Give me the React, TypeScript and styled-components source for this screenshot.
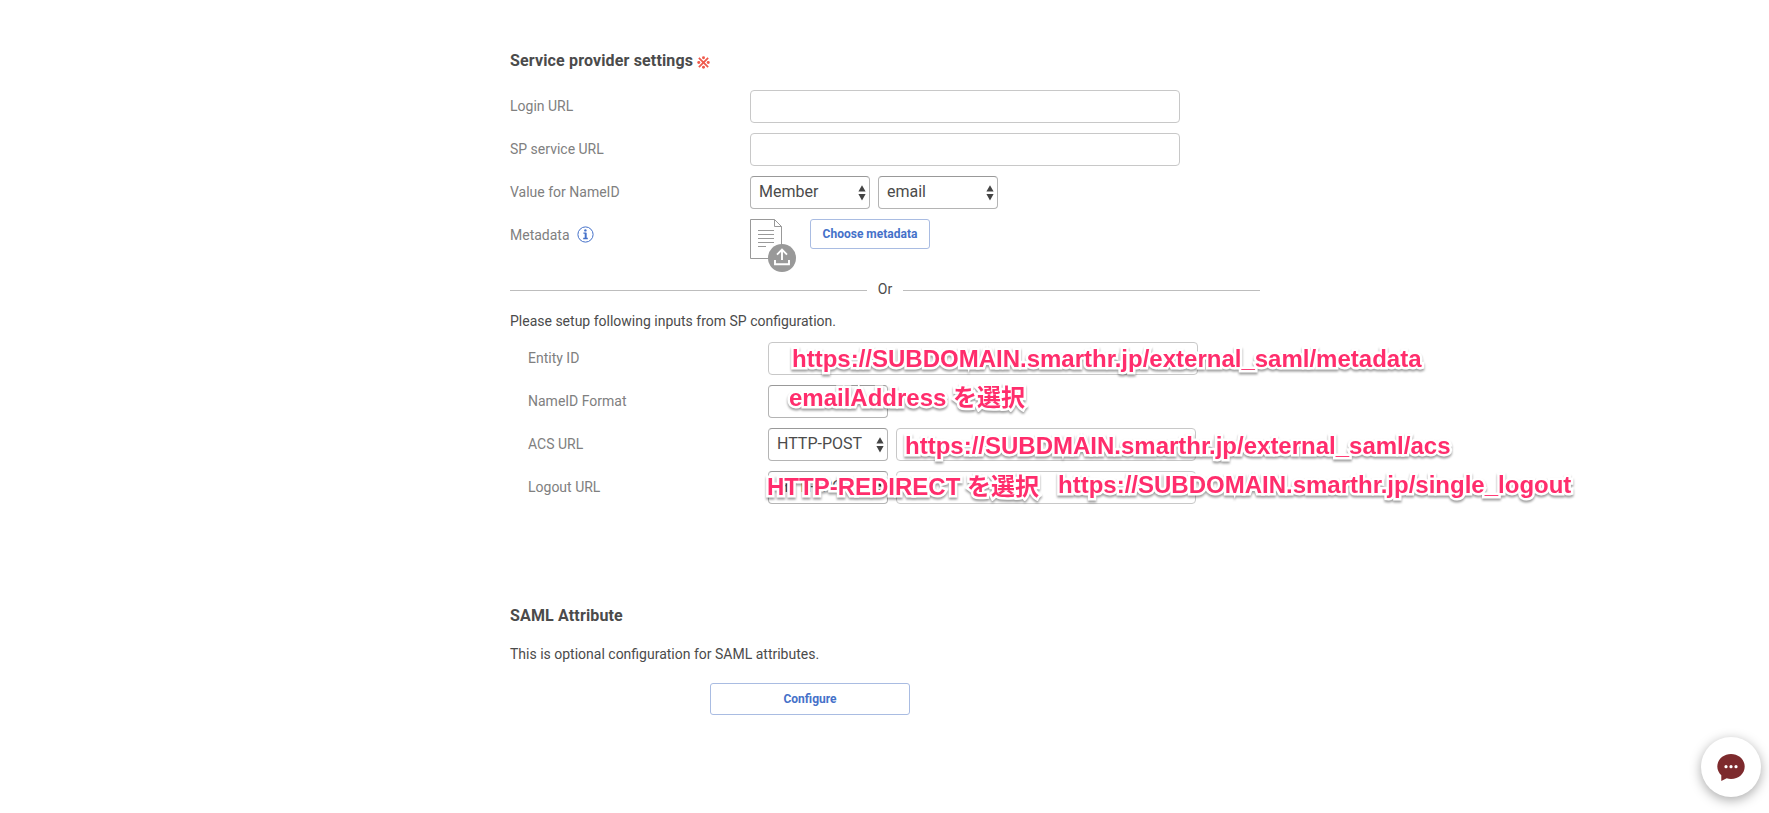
import React from "react";
import styled, { createGlobalStyle } from "styled-components";

const GlobalStyle = createGlobalStyle`
  *, *::before, *::after { box-sizing: border-box; }
  body {
    margin: 0;
    background: #fff;
    color: #4b4b4b;
    font-family: Roboto, "Noto Sans CJK JP", sans-serif;
    font-size: 14px;
    overflow: hidden;
  }
`;

const Page = styled.main`
  position: relative;
  display: flex;
  flex-direction: column;
  width: 1769px;
  height: 813px;
  padding: 50px 509px 0 510px;
`;

const Heading = styled.h2`
  display: flex;
  align-items: center;
  gap: 4px;
  margin: 0;
  height: 22px;
  font-size: 16px;
  font-weight: 700;
  line-height: 22px;
  letter-spacing: 0.15px;
  color: #4b4b4b;
`;

const Fields = styled.div<{ $nested?: boolean }>`
  display: flex;
  flex-direction: column;
  gap: 10px;
  margin-top: ${(p) => (p.$nested ? 11 : 18)}px;
  padding-left: ${(p) => (p.$nested ? 18 : 0)}px;
`;

const Row = styled.div`
  display: grid;
  grid-template-columns: 240px 1fr;
  height: 33px;
`;

const Label = styled.span`
  display: flex;
  align-items: center;
  gap: 7px;
  height: 32px;
  color: #808080;
`;

const Controls = styled.div`
  display: flex;
  align-items: flex-start;
  gap: 8px;
`;

const TextInput = styled.input<{ $width: number }>`
  width: ${(p) => p.$width}px;
  height: 33px;
  padding: 0 8px;
  border: 1px solid #c8c8c8;
  border-radius: 4px;
  background: #fff;
`;

const SelectBox = styled.div`
  display: flex;
  align-items: center;
  justify-content: space-between;
  width: 120px;
  height: 33px;
  padding: 0 3px 0 8px;
  border: 1px solid #b4b4b4;
  border-top-color: #999;
  border-radius: 4px;
  font-size: 16px;
  line-height: 30px;
  color: #4b4b4b;
`;

const SelectText = styled.span`
  padding-bottom: 1px;
`;

const OutlineButton = styled.button<{ $width: number; $height: number }>`
  width: ${(p) => p.$width}px;
  height: ${(p) => p.$height}px;
  padding: 0;
  border: 1px solid #a9bce2;
  border-radius: 3px;
  background: #fff;
  color: #4571c9;
  font: 700 12px Roboto, sans-serif;
`;

const MetadataControls = styled.div`
  display: flex;
  align-items: flex-start;
  gap: 12px;
`;

const Divider = styled.div`
  display: flex;
  align-items: center;
  gap: 11px;
  height: 20px;
  margin-top: 27px;
  &::before, &::after {
    content: "";
    flex: 1;
    height: 1px;
    margin-top: 2px;
    background: #bdbdbd;
  }
`;

const Paragraph = styled.p<{ $top: number }>`
  margin: ${(p) => p.$top}px 0 0;
  height: 20px;
  line-height: 20px;
`;

const Attribute = styled.section`
  display: flex;
  flex-direction: column;
  margin-top: 101px;
`;

const ButtonRow = styled.div`
  display: flex;
  padding-left: 200px;
  margin-top: 19px;
`;

const Note = styled.span<{ $x: number; $y: number }>`
  position: absolute;
  left: ${(p) => p.$x}px;
  top: ${(p) => p.$y}px;
  line-height: 32px;
  white-space: pre;
  font-family: "Liberation Sans", "Noto Sans CJK JP", sans-serif;
  font-size: 24px;
  font-weight: 700;
  color: #ff2d6c;
  -webkit-text-stroke: 5px #fff;
  paint-order: stroke fill;
  stroke-linejoin: round;
  filter: drop-shadow(0 2px 1px rgba(0, 0, 0, 0.38));
`;

const ChatButton = styled.button`
  position: absolute;
  left: 1701px;
  top: 737px;
  display: flex;
  align-items: center;
  justify-content: center;
  width: 60px;
  height: 60px;
  padding: 0;
  border: 0;
  border-radius: 50%;
  background: #fff;
  box-shadow: 0 3px 12px rgba(0, 0, 0, 0.34);
`;

const RequiredSvg = styled.svg`
  margin-top: 2px;
`;

const InfoSvg = styled.svg`
  margin-bottom: 2px;
`;

const RequiredMark = () => (
  <RequiredSvg width="13" height="13" viewBox="0 0 14 14" fill="#ef5a4c">
    <path d="M2 2l10 10M12 2L2 12" stroke="#ef5a4c" strokeWidth="1.9" />
    <circle cx="7" cy="1.900" r="1.600" />
    <circle cx="7" cy="12.100" r="1.600" />
    <circle cx="1.900" cy="7" r="1.600" />
    <circle cx="12.100" cy="7" r="1.600" />
  </RequiredSvg>
);

const InfoIcon = () => (
  <InfoSvg width="17" height="17" viewBox="0 0 17 17" fill="none">
    <circle cx="8.5" cy="8.5" r="7.6" stroke="#4571c9" />
    <circle cx="8.4" cy="4.4" r="1.2" fill="#4571c9" />
    <path d="M6.4 7.2h2.3v5.3M6.2 12.5h4.6" stroke="#4571c9" strokeWidth="1.3" />
    <path d="M8.6 7v5.5" stroke="#4571c9" strokeWidth="1.8" />
  </InfoSvg>
);

const UploadFileIcon = () => (
  <svg width="48" height="54" viewBox="0 0 48 54" fill="none">
    <path d="M.5.5h24l7 7v32H.5z" stroke="#999" />
    <path d="M24.5.5v7h7" stroke="#999" />
    <path d="M8 11.5h16M8 15.5h16M8 19.5h16M8 23.5h16M8 27.5h8" stroke="#999" />
    <circle cx="32" cy="39" r="14" fill="#999" />
    <path d="M32 41V31M27 35.7l5-5 5 5" stroke="#fff" strokeWidth="1.9" />
    <path d="M25 41v4.2h14V41" stroke="#fff" strokeWidth="1.9" />
  </svg>
);

const Arrows = () => (
  <svg width="8" height="16" viewBox="0 0 8 16" fill="#444">
    <path d="M4 .2L7.6 6.6H.4zM4 15.4L.4 9H7.6z" />
  </svg>
);

const ChatIcon = () => (
  <svg width="28" height="28" viewBox="0 0 28 28">
    <path
      d="M14 1C6.4 1 .3 6.500 .3 13.500C.3 17 1.900 20 4.300 22.200V28L9.700 25.300C11 25.800 12.500 26 14 26C21.600 26 27.700 20.500 27.700 13.500S21.600 1 14 1z"
      fill="#7d2a2d"
    />
    <circle cx="9" cy="13.7" r="1.6" fill="#fff" />
    <circle cx="14" cy="13.7" r="1.6" fill="#fff" />
    <circle cx="19" cy="13.7" r="1.6" fill="#fff" />
  </svg>
);

const Select = ({ value }: { value?: string }) => (
  <SelectBox>
    <SelectText>{value}</SelectText>
    {value && <Arrows />}
  </SelectBox>
);

const notes = [
  { x: 792, y: 343, text: "https://SUBDOMAIN.smarthr.jp/external_saml/metadata" },
  { x: 789, y: 382, text: "emailAddress を選択" },
  { x: 905, y: 430, text: "https://SUBDMAIN.smarthr.jp/external_saml/acs" },
  { x: 767, y: 471, text: "HTTP-REDIRECT を選択" },
  { x: 1058, y: 469, text: "https://SUBDOMAIN.smarthr.jp/single_logout" },
];

export default function App() {
  return (
    <>
      <GlobalStyle />
      <Page>
        <Heading>
          Service provider settings <RequiredMark />
        </Heading>
        <Fields>
          <Row>
            <Label>Login URL</Label>
            <TextInput $width={430} />
          </Row>
          <Row>
            <Label>SP service URL</Label>
            <TextInput $width={430} />
          </Row>
          <Row>
            <Label>Value for NameID</Label>
            <Controls>
              <Select value="Member" />
              <Select value="email" />
            </Controls>
          </Row>
          <Row>
            <Label>
              Metadata <InfoIcon />
            </Label>
            <MetadataControls>
              <UploadFileIcon />
              <OutlineButton $width={120} $height={30}>
                Choose metadata
              </OutlineButton>
            </MetadataControls>
          </Row>
        </Fields>
        <Divider>Or</Divider>
        <Paragraph $top={12}>Please setup following inputs from SP configuration.</Paragraph>
        <Fields $nested>
          <Row>
            <Label>Entity ID</Label>
            <TextInput $width={430} />
          </Row>
          <Row>
            <Label>NameID Format</Label>
            <Select />
          </Row>
          <Row>
            <Label>ACS URL</Label>
            <Controls>
              <Select value="HTTP-POST" />
              <TextInput $width={300} />
            </Controls>
          </Row>
          <Row>
            <Label>Logout URL</Label>
            <Controls>
              <Select value="HTTP-POST" />
              <TextInput $width={300} />
            </Controls>
          </Row>
        </Fields>
        <Attribute>
          <Heading>SAML Attribute</Heading>
          <Paragraph $top={17}>This is optional configuration for SAML attributes.</Paragraph>
          <ButtonRow>
            <OutlineButton $width={200} $height={32}>
              Configure
            </OutlineButton>
          </ButtonRow>
        </Attribute>
        {notes.map((n) => (
          <Note key={n.text} $x={n.x} $y={n.y}>
            {n.text}
          </Note>
        ))}
        <ChatButton aria-label="Chat">
          <ChatIcon />
        </ChatButton>
      </Page>
    </>
  );
}
